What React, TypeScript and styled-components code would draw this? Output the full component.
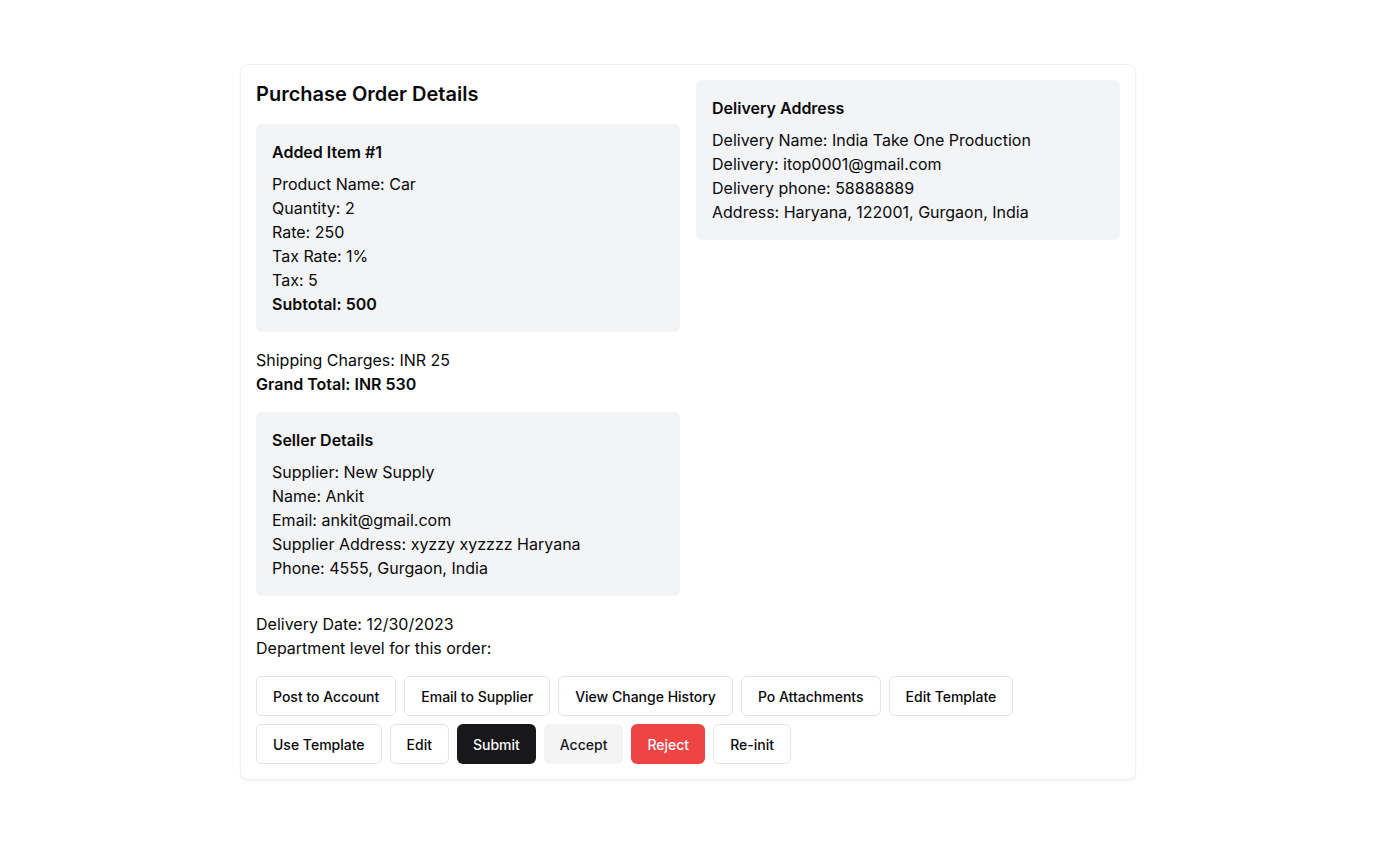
import React from "react";
import styled, { createGlobalStyle, css } from "styled-components";

const Global = createGlobalStyle`
  * { box-sizing: border-box; }
  body {
    margin: 0;
    background: #ffffff;
    font-family: Inter, "Noto Sans", "Liberation Sans", sans-serif;
    color: #09090b;
  }
`;

const Page = styled.div`
  padding: 64px 0;
  display: flex;
  justify-content: center;
`;

const Card = styled.div`
  width: 896px;
  padding: 15px;
  background: #fff;
  border: 1px solid #f0f0f2;
  border-radius: 8px;
  box-shadow: 0 1px 2px rgba(0, 0, 0, 0.05);
`;

const Grid = styled.div`
  display: grid;
  grid-template-columns: 1fr 1fr;
  gap: 16px;
  align-items: start;
`;

const Column = styled.div`
  display: flex;
  flex-direction: column;
`;

const Title = styled.h2`
  margin: 0 0 16px;
  font-size: 20px;
  line-height: 28px;
  font-weight: 600;
`;

const Panel = styled.div<{ $mb?: number }>`
  background: #f3f4f6;
  border-radius: 6px;
  padding: 16px;
  margin-bottom: ${(p) => p.$mb ?? 0}px;
`;

const PanelTitle = styled.h3`
  margin: 0 0 8px;
  font-size: 16px;
  line-height: 24px;
  font-weight: 600;
`;

const Line = styled.p<{ $bold?: boolean }>`
  margin: 0;
  font-size: 16px;
  line-height: 24px;
  font-weight: ${(p) => (p.$bold ? 600 : 400)};
`;

const Block = styled.div<{ $mb?: number }>`
  margin-bottom: ${(p) => p.$mb ?? 0}px;
`;

const Actions = styled.div`
  display: flex;
  flex-wrap: wrap;
  gap: 8px;
  margin-top: 16px;
`;

type Variant = "outline" | "primary" | "secondary" | "danger";

const Button = styled.button<{ $variant?: Variant }>`
  height: 40px;
  padding: 0 16px;
  border-radius: 6px;
  font-family: inherit;
  font-size: 14px;
  font-weight: 500;
  cursor: pointer;
  border: none;
  ${(p) => {
    switch (p.$variant) {
      case "primary":
        return css`
          background: #18181b;
          color: #fafafa;
        `;
      case "secondary":
        return css`
          background: #f4f4f5;
          color: #18181b;
        `;
      case "danger":
        return css`
          background: #ef4444;
          color: #fafafa;
        `;
      default:
        return css`
          background: #fff;
          color: #09090b;
          border: 1px solid #e4e4e7;
        `;
    }
  }}
`;

export default function App() {
  return (
    <>
      <Global />
      <Page>
        <Card>
          <Grid>
            <Column>
              <Title>Purchase Order Details</Title>
              <Panel $mb={16}>
                <PanelTitle>Added Item #1</PanelTitle>
                <Line>Product Name: Car</Line>
                <Line>Quantity: 2</Line>
                <Line>Rate: 250</Line>
                <Line>Tax Rate: 1%</Line>
                <Line>Tax: 5</Line>
                <Line $bold>Subtotal: 500</Line>
              </Panel>
              <Block $mb={16}>
                <Line>Shipping Charges: INR 25</Line>
                <Line $bold>Grand Total: INR 530</Line>
              </Block>
              <Panel $mb={16}>
                <PanelTitle>Seller Details</PanelTitle>
                <Line>Supplier: New Supply</Line>
                <Line>Name: Ankit</Line>
                <Line>Email: ankit@gmail.com</Line>
                <Line>Supplier Address: xyzzy xyzzzz Haryana</Line>
                <Line>Phone: 4555, Gurgaon, India</Line>
              </Panel>
              <Block>
                <Line>Delivery Date: 12/30/2023</Line>
                <Line>Department level for this order:</Line>
              </Block>
            </Column>
            <Column>
              <Panel>
                <PanelTitle>Delivery Address</PanelTitle>
                <Line>Delivery Name: India Take One Production</Line>
                <Line>Delivery: itop0001@gmail.com</Line>
                <Line>Delivery phone: 58888889</Line>
                <Line>Address: Haryana, 122001, Gurgaon, India</Line>
              </Panel>
            </Column>
          </Grid>
          <Actions>
            <Button>Post to Account</Button>
            <Button>Email to Supplier</Button>
            <Button>View Change History</Button>
            <Button>Po Attachments</Button>
            <Button>Edit Template</Button>
            <Button>Use Template</Button>
            <Button>Edit</Button>
            <Button $variant="primary">Submit</Button>
            <Button $variant="secondary">Accept</Button>
            <Button $variant="danger">Reject</Button>
            <Button>Re-init</Button>
          </Actions>
        </Card>
      </Page>
    </>
  );
}
